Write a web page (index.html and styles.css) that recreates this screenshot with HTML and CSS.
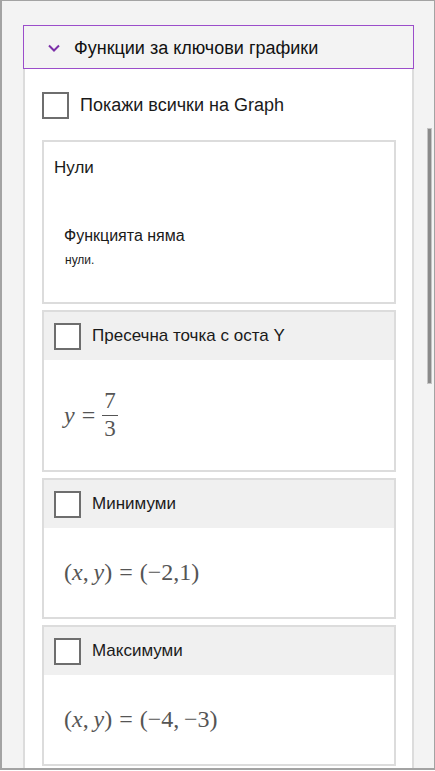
FILE: index.html
```html
<!DOCTYPE html>
<html lang="bg">
<head>
    <meta charset="UTF-8">
    <meta name="viewport" content="width=device-width, initial-scale=1.0">
    <title>Функции за ключови графики</title>
    <link rel="stylesheet" href="styles.css">
</head>
<body>
    <div class="frame">
        <div class="pane">
            <div class="section-header">
                <svg class="chevron" width="14" height="10" viewBox="0 0 14 10">
                    <path d="M2 2.5 L7 7.5 L12 2.5" fill="none" stroke="#7b2fa8" stroke-width="2"/>
                </svg>
                <span>Функции за ключови графики</span>
            </div>

            <div class="section-body">
                <label class="show-all">
                    <span class="box"></span>
                    <span>Покажи всички на Graph</span>
                </label>

                <div class="card zeros">
                    <div class="zeros-title">Нули</div>
                    <div class="zeros-msg">Функцията няма</div>
                    <div class="zeros-small">нули.</div>
                </div>

                <div class="card">
                    <div class="card-head">
                        <span class="box"></span>
                        <span>Пресечна точка с оста Y</span>
                    </div>
                    <div class="card-math">
                        <span class="mi">y</span><span class="mo">=</span><span class="frac"><span class="num">7</span><span class="den">3</span></span>
                    </div>
                </div>

                <div class="card">
                    <div class="card-head">
                        <span class="box"></span>
                        <span>Минимуми</span>
                    </div>
                    <div class="card-math short">
                        (<span class="mi">x</span>,&thinsp;<span class="mi">y</span>)<span class="mo">=</span>(−2,1)
                    </div>
                </div>

                <div class="card">
                    <div class="card-head">
                        <span class="box"></span>
                        <span>Максимуми</span>
                    </div>
                    <div class="card-math short">
                        (<span class="mi">x</span>,&thinsp;<span class="mi">y</span>)<span class="mo">=</span>(−4,&thinsp;−3)
                    </div>
                </div>
            </div>
        </div>
        <div class="scroll-thumb"></div>
    </div>
</body>
</html>
```

FILE: styles.css
```css
html, body {
    margin: 0;
    height: 100%;
}

body {
    font-family: "Liberation Sans", Arial, sans-serif;
    color: #1a1a1a;
    background: #fff;
}

.frame {
    position: relative;
    box-sizing: border-box;
    height: 770px;
    background: #f3f3f3;
    border: 1px solid #a3a3a3;
    border-left-width: 2px;
    border-bottom-width: 2px;
    padding: 24px 20px 0 21px;
    overflow: hidden;
}

.pane {
    width: 391px;
}

.section-header {
    display: flex;
    align-items: center;
    height: 40px;
    padding-top: 2px;
    border: 1px solid #9b4dca;
    background: #f3f3f3;
    font-size: 18px;
    color: #111;
}

.chevron {
    margin: 0 13px 0 23px;
}

.section-body {
    background: #fff;
    border-left: 2px solid #dcdcdc;
    border-right: 2px solid #dcdcdc;
    padding: 23px 16px 10px 17px;
    height: 720px;
}

.box {
    display: inline-block;
    box-sizing: border-box;
    width: 27px;
    height: 27px;
    border: 2px solid #6e6e6e;
    background: #fff;
    flex: none;
}

.show-all {
    display: flex;
    align-items: center;
    gap: 11px;
    font-size: 18px;
    margin-bottom: 21px;
}

.card {
    border: 2px solid #dcdcdc;
    background: #fff;
    margin-bottom: 6px;
}

.zeros {
    height: 164px;
    box-sizing: border-box;
    padding: 16px 10px 0 10px;
    font-size: 17px;
}

.zeros-title {
    margin-bottom: 49px;
}

.zeros-msg {
    padding-left: 10px;
    margin-bottom: 8px;
    font-size: 16px;
}

.zeros-small {
    padding-left: 11px;
    font-size: 12px;
}

.card-head {
    display: flex;
    align-items: center;
    gap: 11px;
    height: 48px;
    padding-left: 10px;
    background: #f0f0f0;
    font-size: 17px;
}

.card-math {
    display: flex;
    align-items: center;
    height: 110px;
    padding-left: 20px;
    font-family: "Liberation Serif", "DejaVu Serif", serif;
    font-size: 24px;
    color: #555;
}

.card-math.short {
    height: 89px;
}

.mi {
    font-style: italic;
}

.mo {
    margin: 0 7px;
}

.frac {
    display: inline-flex;
    flex-direction: column;
    align-items: center;
    font-size: 23px;
    line-height: 1.05;
}

.num {
    border-bottom: 1.5px solid #555;
    padding: 0 2px 1px;
}

.den {
    padding-top: 1px;
}

.scroll-thumb {
    position: absolute;
    left: 425px;
    top: 127px;
    width: 3px;
    height: 254px;
    background: #8a8a8a;
    border: 1px solid #c4c4c4;
}
```
